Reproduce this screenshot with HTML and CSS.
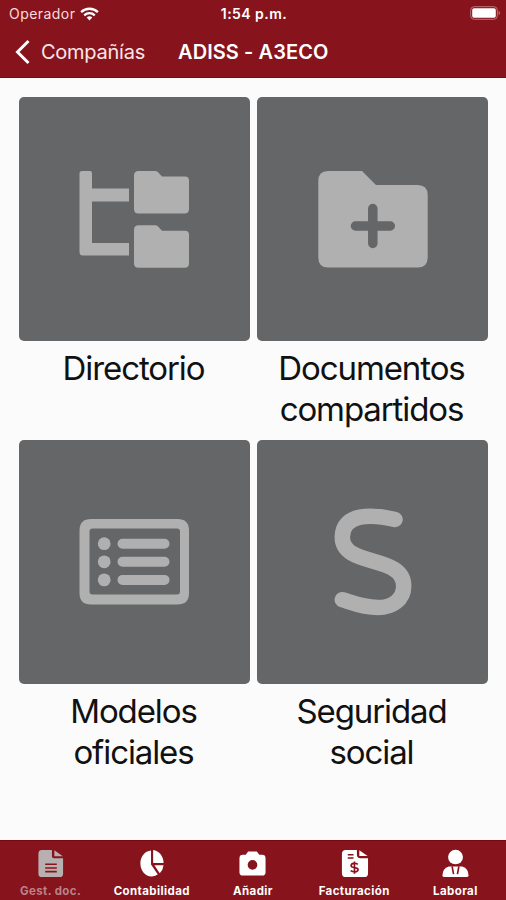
FILE: index.html
```html
<!DOCTYPE html>
<html lang="es">
<head>
<meta charset="utf-8">
<title>ADISS - A3ECO</title>
<link rel="stylesheet" href="styles.css">
</head>
<body>
<div class="app">
  <header class="header">
    <div class="status">
      <div class="carrier"><span class="carrier-name">Operador</span>
        <svg class="wifi" width="19" height="14" viewBox="0 0 19 14"><g fill="none" stroke="#fff" stroke-width="2.3"><path d="M1.1 5.2C6 .6 13 .6 17.900 5.200"/><path d="M4.200 8.400C7.300 5.500 11.700 5.500 14.800 8.400"/></g><path d="M6.700 10.400C8.400 8.900 10.600 8.900 12.300 10.400L9.500 13.400Z" fill="#fff"/></svg>
      </div>
      <span class="clock">1:54 p.m.</span>
      <svg class="battery" width="31" height="15" viewBox="0 0 31 15"><rect x=".7" y=".7" width="26.600" height="12.600" rx="3.500" fill="none" stroke="#b87579"/><rect x="2.200" y="2.200" width="23.600" height="9.600" rx="1.800" fill="#fff"/><path d="M28.700 4.800Q31 7 28.700 9.200Z" fill="#c58b8e"/></svg>
    </div>
    <nav class="nav">
      <a class="back"><svg class="chevron" width="16" height="26" viewBox="0 0 16 26"><path d="M13.500 2L2.500 13L13.500 24" fill="none" stroke="#fff" stroke-width="3"/></svg><span class="back-text">Compañías</span></a>
      <h1 class="title">ADISS - A3ECO</h1>
    </nav>
  </header>
  <main class="grid">
    <section class="item">
      <svg class="tile" viewBox="19 97 231 244"><path d="M82 171H90Q92 171 92 173V188.500H129V201.500H92V243H129V255.500H83Q79.500 255.500 79.500 252V173.500Q79.500 171 82 171Z"/><path id="folder" d="M138.500 171H155Q157 171 158.300 172.400L162 176.500H185Q189 176.500 189 180.500V209Q189 213.500 184.500 213.500H138.500Q134 213.500 134 209V175.500Q134 171 138.500 171Z"/><use href="#folder" y="54.300"/></svg>
      <p class="label">Directorio</p>
    </section>
    <section class="item">
      <svg class="tile" viewBox="257 97 231 244"><path d="M328 171H362L376 185H417.500Q427.700 185 427.700 195V257.500Q427.700 267.500 417.500 267.500H328Q318.300 267.500 318.300 257.500V181Q318.300 171 328 171Z"/><path class="plus" d="M372.800 208.500V243.500M355.500 226H390.300"/></svg>
      <p class="label">Documentos<br>compartidos</p>
    </section>
    <section class="item">
      <svg class="tile" viewBox="19 440 231 244"><path fill-rule="evenodd" d="M91 519H177.500Q189 519 189 530.500V593Q189 604.500 177.500 604.500H91Q79.500 604.500 79.500 593V530.500Q79.500 519 91 519ZM92.500 528.500Q89.500 528.500 89.500 531.500V591.500Q89.500 594.500 92.500 594.500H177Q180 594.500 180 591.500V531.500Q180 528.500 177 528.500Z"/><g><circle cx="104.200" cy="543.700" r="6.400"/><circle cx="104.200" cy="561.800" r="6.400"/><circle cx="104.200" cy="579.900" r="6.400"/></g><path class="rows" d="M122.500 543.700H164.500M122.500 561.800H164.500M122.500 579.900H164.500"/></svg>
      <p class="label">Modelos<br>oficiales</p>
    </section>
    <section class="item">
      <svg class="tile" viewBox="257 440 231 244"><path class="curve" d="M395 519.500C372 514 342.300 513 342.300 537C342.300 568 403.700 554 403.700 586C403.700 600 392 607.500 378 607.500C363 607.500 353 603 342.300 599.700"/></svg>
      <p class="label">Seguridad<br>social</p>
    </section>
  </main>
  <footer class="tabs">
    <a class="tab active">
      <svg class="tab-icon" viewBox="0 0 30 30"><path d="M6 1H16.500V7.500Q16.500 9.500 18.500 9.500H28V25.500Q28 29 24.500 29H6Q2.500 29 2.500 25.500V5Q2.500 1 6 1ZM19 1.200L27.700 7.500H19Z"/><path class="detail" d="M9.500 15.800H21.500M9.500 19.600H21.500M9.500 23.400H21.500"/></svg>
      <span>Gest. doc.</span></a>
    <a class="tab">
      <svg class="tab-icon" viewBox="0 0 30 30"><path d="M14.500 1.500V16L21.500 26.500C12.500 32 3.500 25 3.500 15C3.500 8 8 2 14.500 1.500ZM16.700 1C23 2 27.500 7.500 27.500 14.500H16.700ZM18 16.700H27.500Q27 21.500 23.500 25Z"/></svg>
      <span>Contabilidad</span></a>
    <a class="tab">
      <svg class="tab-icon" viewBox="0 0 30 30"><path fill-rule="evenodd" d="M10.500 2.500H19.500L22 6H25Q28.500 6 28.500 9.500V24Q28.500 27.500 25 27.500H5Q1.500 27.500 1.500 24V9.500Q1.500 6 5 6H8ZM15 11.500A5 5 0 1 0 15 21.500A5 5 0 1 0 15 11.500Z"/></svg>
      <span>Añadir</span></a>
    <a class="tab">
      <svg class="tab-icon" viewBox="0 0 30 30"><path d="M6 1H17.500V6Q17.500 9.500 21 9.500H29V25Q29 29 25 29H6Q2 29 2 25V5Q2 1 6 1ZM20 1.200L28.500 7.300H20Z"/><path class="detail thin" d="M8 6H14M8 9.300H14M18.500 16C16 14 11.500 14.500 11.500 17.200C11.500 20.200 18.700 18.200 18.700 21.300C18.700 24 14 24.400 11 22.300M15 13V25.500"/></svg>
      <span>Facturación</span></a>
    <a class="tab">
      <svg class="tab-icon" viewBox="0 0 30 30"><ellipse cx="15" cy="8.300" rx="7.700" ry="7.500"/><path d="M8 18H22Q28.500 20 28.500 27.500Q28.500 29 27 29H3Q1.500 29 1.500 27.500Q1.500 20 8 18Z"/><path class="detail thin" d="M11.500 18L13 26M18.500 18L17 26"/></svg>
      <span>Laboral</span></a>
  </footer>
</div>
</body>
</html>
```
FILE: styles.css
```css
* { box-sizing: border-box; }
body { margin: 0; background: #fbfbfb; font-family: Inter, "Liberation Sans", sans-serif; }
svg { display: block; flex: none; }
.app { width: 506px; height: 900px; display: flex; flex-direction: column; overflow: hidden; }
.header { height: 78px; background: #87141c; color: #fff; border-bottom: 1px solid #7a0b12; flex: none; }
.status { height: 27px; display: grid; grid-template-columns: 1fr auto 1fr; align-items: center; padding: 0 7px 0 9px; line-height: 27px; }
.carrier { display: flex; align-items: center; gap: 5px; color: #f7dcdd; font-size: 14px; letter-spacing: 0.450px; }
.clock { font-weight: 600; font-size: 14px; letter-spacing: 0.450px; }
.battery { justify-self: end; margin-right: -2px; }
.nav { display: flex; align-items: center; height: 50px; padding-left: 15px; }
.back { display: flex; align-items: center; gap: 10px; width: 163px; font-size: 20px; letter-spacing: -0.250px; color: #f9e6e6; }
.title { margin: 0; font-size: 20px; font-weight: 600; letter-spacing: 0.080px; white-space: nowrap; }
.grid { flex: 1; display: grid; grid-template-columns: 231px 231px; grid-template-rows: 343px 343px; column-gap: 7px; padding: 19px 0 0 19px; }
.tile { width: 231px; height: 244px; border-radius: 5px; background: #646667; fill: #b0b0b0; }
.plus { stroke: #646667; stroke-width: 9.500px; stroke-linecap: round; }
.rows { stroke: #b0b0b0; stroke-width: 10px; stroke-linecap: round; }
.curve { fill: none; stroke: #b0b0b0; stroke-width: 15.500px; stroke-linecap: round; }
.label { margin: 7px 0 0; padding-right: 2px; font-size: 33px; line-height: 41px; letter-spacing: -1.100px; text-align: center; color: #111; white-space: nowrap; }
.tabs { height: 60px; flex: none; display: grid; grid-template-columns: repeat(5, 1fr); background: #87141c; border-top: 1px solid #78070f; color: #fff; }
.tab { display: flex; flex-direction: column; align-items: center; padding-top: 8px; font-size: 11.500px; line-height: 14px; letter-spacing: 0.400px; font-weight: 700; white-space: nowrap; }
.tab-icon { width: 29px; height: 29px; fill: #fff; margin-bottom: 6px; }
.active { color: #b98387; }
.active .tab-icon { fill: #b8b0b0; }
.detail { fill: none; stroke: #87141c; stroke-width: 1.600px; }
.thin { stroke-width: 1.700px; }
```
